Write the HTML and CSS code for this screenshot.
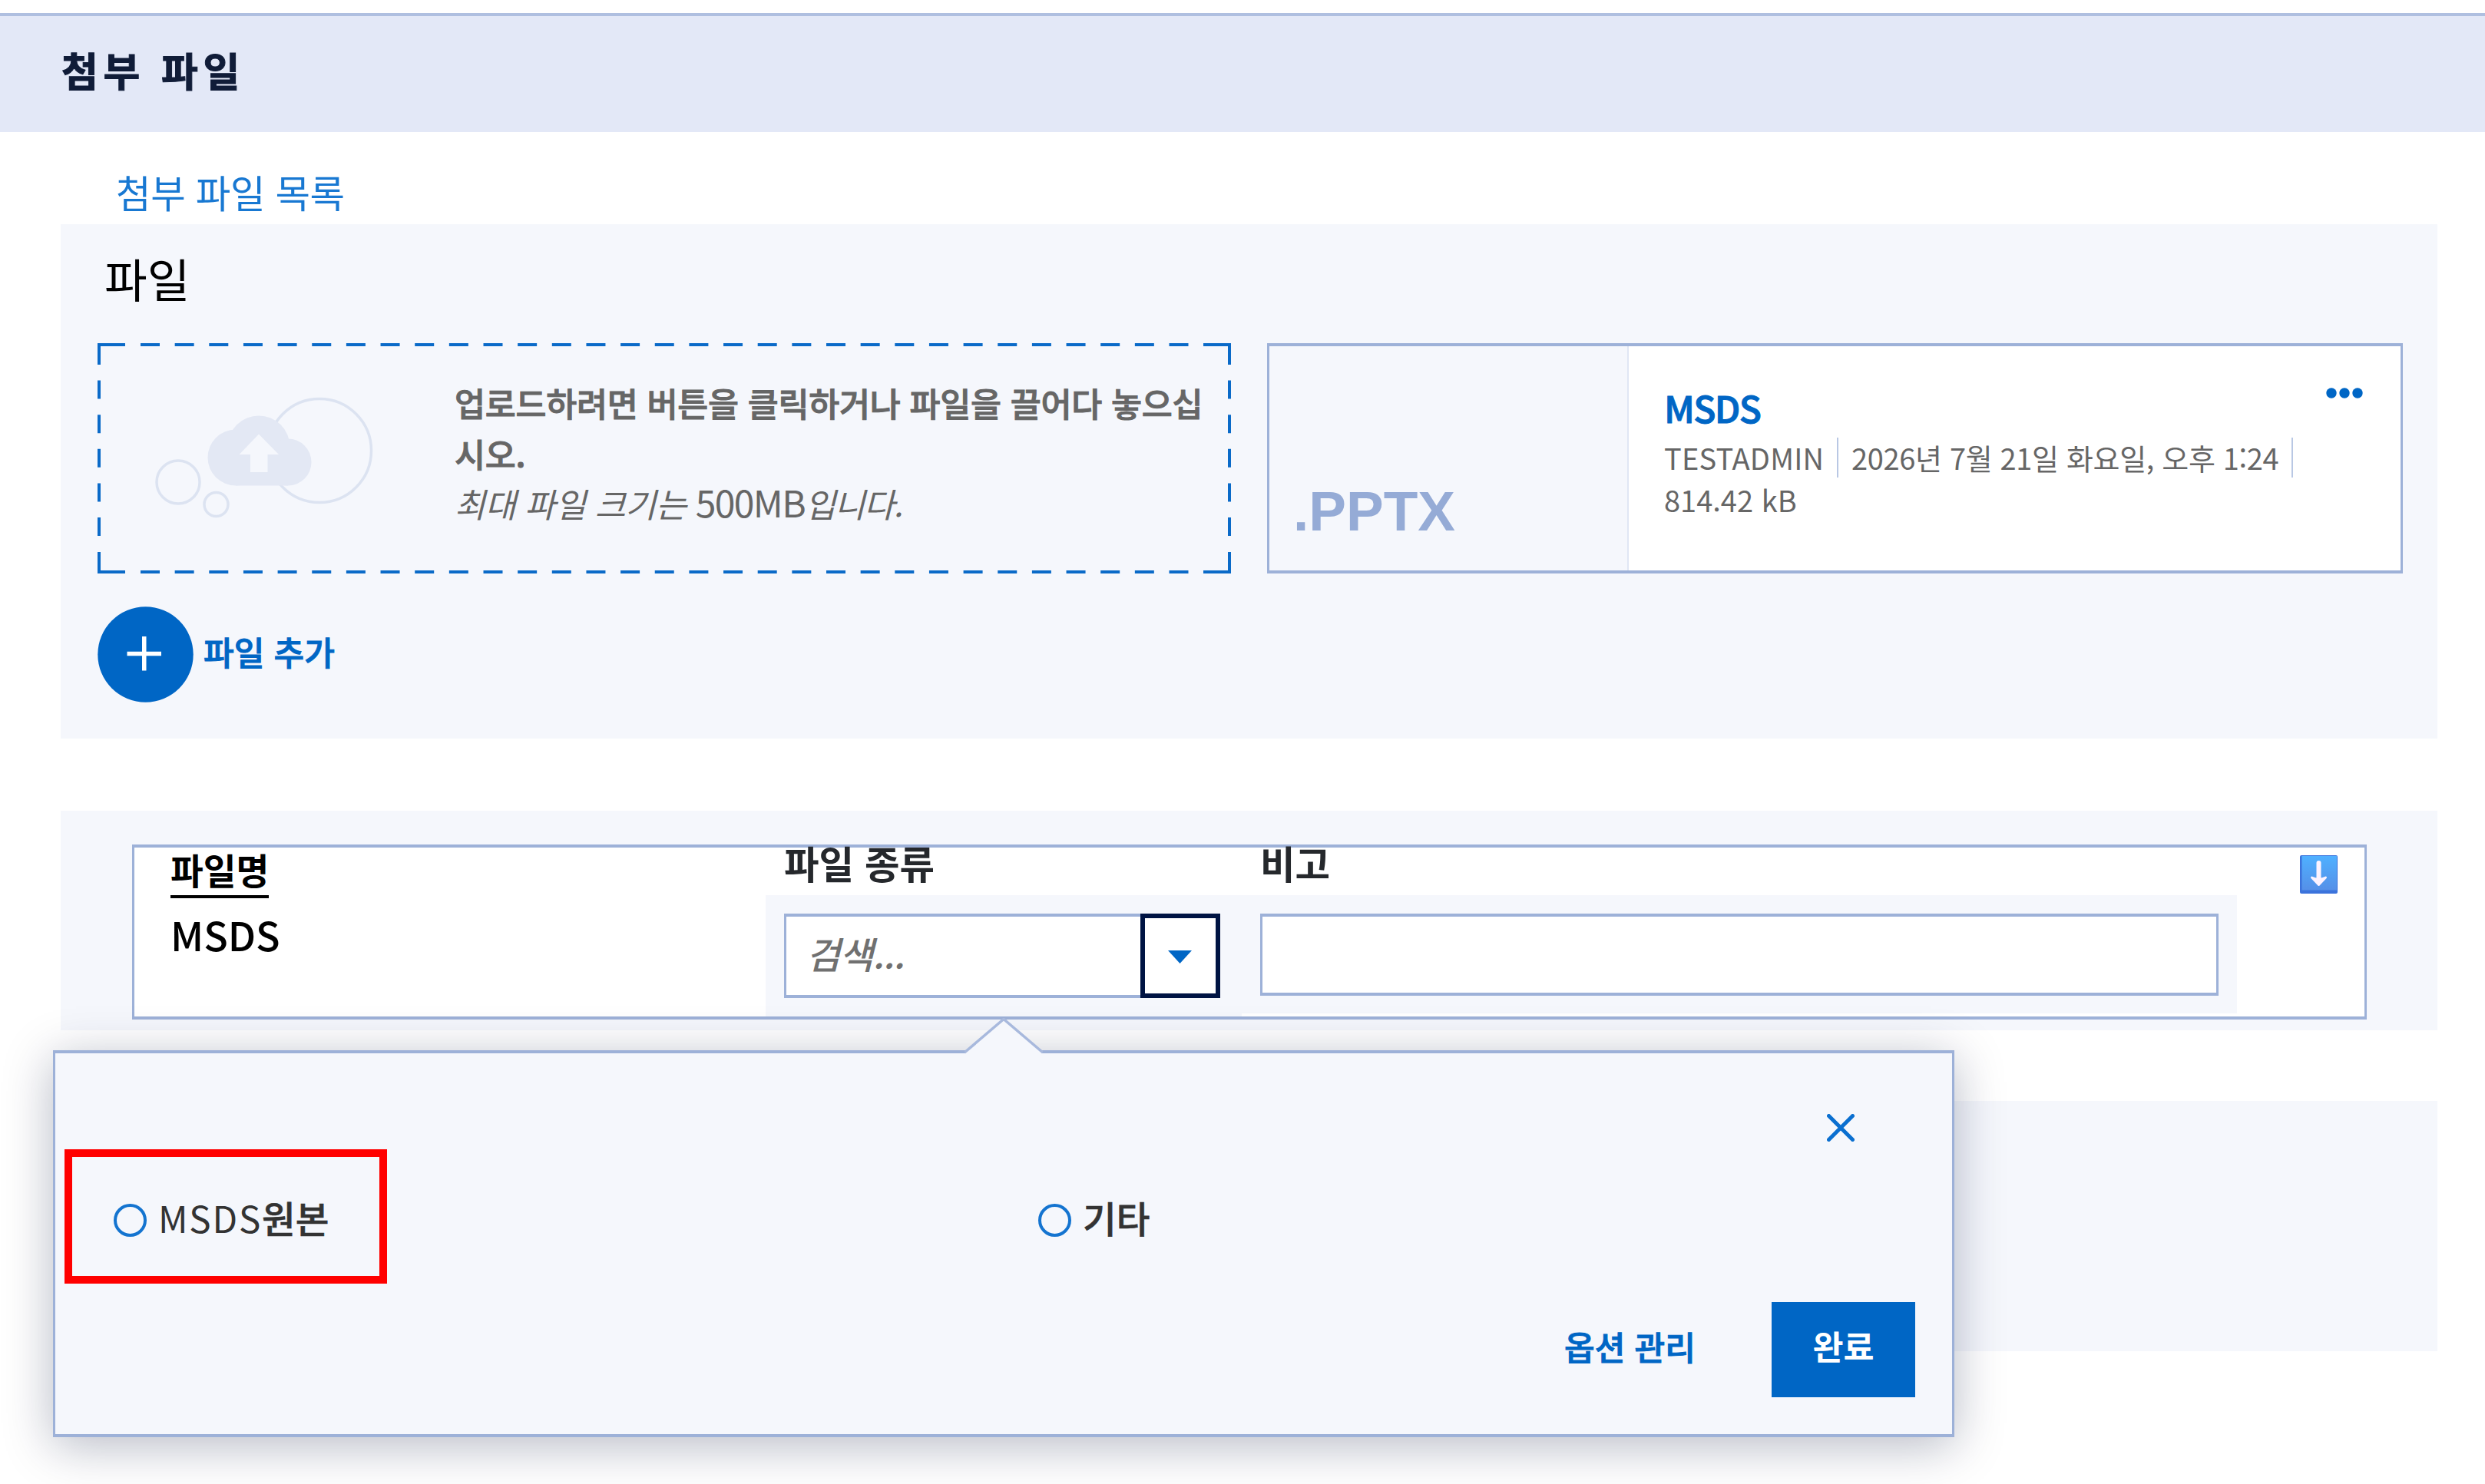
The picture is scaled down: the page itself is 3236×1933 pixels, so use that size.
FILE: index.html
```html
<!DOCTYPE html>
<html lang="ko">
<head>
<meta charset="utf-8">
<title>첨부 파일</title>
<link rel="stylesheet" href="styles.css">
</head>
<body>
<header class="section-header"><h1 class="section-title">첨부 파일</h1></header>
<nav class="tabs"><a class="tab-link">첨부 파일 목록</a></nav>

<main class="content">
  <section class="panel files">
    <h2 class="files-title">파일</h2>
    <div class="file-grid">
      <div class="dropzone">
        <svg class="dash-frame" width="1476" height="300" viewBox="0 0 1476 300" fill="none" stroke="#0a6ac8" stroke-width="4">
          <path d="M56 2H1436M56 298H1436" stroke-dasharray="25 19.65"/>
          <path d="M2 48.5V268M1474 48.5V268" stroke-dasharray="24 20.65"/>
          <path d="M36 2H2V28M1440 2H1474V28M36 298H2V272M1440 298H1474V272"/>
        </svg>
        <svg class="drop-art" width="465" height="300" viewBox="127 447 465 300">
          <g fill="#f5f7fc" stroke="#dce3f1" stroke-width="3.500">
            <circle cx="416" cy="587" r="67.500"/>
            <circle cx="232" cy="628" r="28"/>
            <circle cx="281.500" cy="657" r="15.500"/>
          </g>
          <g fill="#e3e8f4">
            <circle cx="337" cy="582" r="40.500"/>
            <circle cx="307" cy="596" r="36.500"/>
            <circle cx="375" cy="602" r="30.500"/>
            <path d="M307 590H375V632.500H307z"/>
          </g>
          <path fill="#f5f7fc" d="M337 565.500L363 592H348.500V615H326V592H311.500z"/>
        </svg>
        <div class="drop-text">
          <p class="drop-lead">업로드하려면 버튼을 클릭하거나 파일을 끌어다 놓으십<br>시오.</p>
          <p class="drop-hint"><i>최대 파일 크기는</i> <span class="size">500MB</span><i class="tail">입니다.</i></p>
        </div>
      </div>

      <article class="file-card">
        <div class="thumb">.PPTX</div>
        <div class="file-info">
          <div class="file-top">
            <a class="file-name">MSDS</a>
            <svg class="more" width="48" height="16" viewBox="0 0 48 16" fill="#0066c5"><circle cx="7" cy="8" r="6.700"/><circle cx="24" cy="8" r="6.700"/><circle cx="41" cy="8" r="6.700"/></svg>
          </div>
          <div class="meta"><span class="owner">TESTADMIN</span><span class="bar"></span><span class="date">2026년 7월 21일 화요일, 오후 1:24</span><span class="bar"></span></div>
          <div class="meta"><span class="bytes">814.42 kB</span></div>
        </div>
      </article>
    </div>
    <div class="add-row">
      <svg width="125" height="125" viewBox="0 0 125 125"><circle cx="62.500" cy="62.500" r="62.200" fill="#0066c5"/><path d="M38.500 61.500H83M60.750 39V83.500" stroke="#fff" stroke-width="5.500"/></svg>
      <span class="add-label">파일 추가</span>
    </div>
  </section>

  <section class="panel records">
    <div class="record">
      <div class="name-col">
        <span class="name-head">파일명</span>
        <span class="name-value">MSDS</span>
      </div>
      <div class="field type-field">
        <label class="field-label">파일 종류</label>
        <div class="field-body">
          <div class="combo">
            <div class="combo-input">검색...</div>
            <div class="combo-button"><svg width="32" height="18" viewBox="0 0 32 18"><path d="M0 0H31L15.500 17z" fill="#0066c5"/></svg></div>
          </div>
        </div>
      </div>
      <div class="field note-field">
        <label class="field-label">비고</label>
        <div class="field-body"><div class="note-input"></div></div>
      </div>
      <svg class="download" width="49" height="50" viewBox="0 0 49 50">
        <defs><linearGradient id="dl" x1="0" y1="0" x2="0" y2="1"><stop offset="0" stop-color="#4fb0ff"/><stop offset="1" stop-color="#5590e8"/></linearGradient></defs>
        <rect width="49" height="50" rx="2" fill="#3b73dc"/>
        <path d="M2.500 1H48V45.500H2.500z" fill="url(#dl)"/>
        <path d="M24.500 10V32" stroke="#fdf3ff" stroke-width="6" stroke-linecap="round"/>
        <path d="M15.500 29Q24.500 33 33.500 29L24.500 38.500z" fill="#fdf3ff" stroke="#fdf3ff" stroke-width="3" stroke-linejoin="round"/>
      </svg>
    </div>
  </section>

  <section class="panel blank"></section>
</main>

<div class="popup" role="dialog">
  <svg class="popup-tip" width="102" height="48" viewBox="0 0 102 48"><path d="M1 44L51 1L101 44V48H1z" fill="#f5f7fc"/><path d="M0 45L51 1.500L102 45" fill="none" stroke="#a8b9dd" stroke-width="3.500"/></svg>
  <div class="popup-head"><svg width="36" height="36" viewBox="0 0 36 36"><path d="M2.500 2.500L33.500 33.500M33.500 2.500L2.500 33.500" stroke="#0a6fd0" stroke-width="5" stroke-linecap="round"/></svg></div>
  <div class="options">
    <div class="option"><span class="radio"></span><span class="option-label"><span class="latin">MSDS</span>원본</span></div>
    <div class="option"><span class="radio"></span><span class="option-label">기타</span></div>
  </div>
  <div class="popup-foot"><a class="manage">옵션 관리</a><div class="done">완료</div></div>
  <div class="highlight"></div>
</div>
</body>
</html>
```
FILE: styles.css
```css
* { box-sizing: border-box; }
body {
  margin: 0;
  padding-top: 17px;
  width: 3236px;
  height: 1933px;
  position: relative;
  overflow: hidden;
  background: #fff;
  font-family: "Noto Sans CJK KR", sans-serif;
}
h1, h2, p { margin: 0; font-weight: inherit; }
svg { display: block; flex: none; }

.section-header {
  height: 155px;
  border-top: 4px solid #afbfe0;
  background: #e3e8f7;
  padding-left: 80px;
}
.section-title {
  font-size: 52px;
  font-weight: 700;
  letter-spacing: 6.6px;
  line-height: 139px;
  color: #101c38;
  -webkit-text-stroke: 1px #101c38;
}
.tabs { height: 120px; padding-left: 151px; }
.tab-link { font-size: 49.5px; letter-spacing: -.4px; line-height: 156px; color: #1878d2; }

.content { padding: 0 62px 0 79px; }
.panel { background: #f5f7fc; }

.files { height: 670px; padding: 0 45px 0 48px; }
.files-title { font-size: 60.5px; line-height: 140px; margin-bottom: 15px; padding-left: 9px; color: #000; }
.file-grid { display: grid; grid-template-columns: 1476px 1479px; gap: 47px; height: 300px; }

.dropzone { position: relative; display: flex; }
.dash-frame { position: absolute; inset: 0; }
.drop-text { padding-top: 45px; line-height: 65.5px; font-size: 43.5px; color: #666; white-space: nowrap; }
.drop-lead { font-weight: 500; letter-spacing: -.25px; -webkit-text-stroke: 1px #666; }
.drop-hint { letter-spacing: -.3px; }
.size { font-size: 48px; line-height: 1; letter-spacing: -1.6px; }
.tail { letter-spacing: -1.6px; }

.file-card { display: flex; border: 4px solid #9db1d8; border-width: 4px 3px; background: #fff; }
.thumb {
  width: 468px;
  padding: 0 0 41px 31px;
  display: flex;
  align-items: flex-end;
  background: #f5f7fc;
  border-right: 2px solid #e0e6f4;
  font: 700 73px/1 "Liberation Sans", sans-serif;
  color: #95abd6;
}
.file-info { flex: 1; padding: 49px 49px 0 46px; }
.file-top { display: flex; justify-content: space-between; margin-bottom: 8px; }
.file-name { font-size: 48px; line-height: 60px; font-weight: 500; letter-spacing: -1.6px; color: #0066c5; -webkit-text-stroke: 1px #0066c5; }
.more { margin-top: 4px; }
.meta { display: flex; align-items: center; height: 55px; font-size: 38px; line-height: 55px; color: #666; white-space: nowrap; }
.owner { letter-spacing: .15px; }
.date { letter-spacing: -.35px; }
.bar { width: 2px; height: 52px; margin: 0 17px; background: #b9c8e4; }

.add-row { display: flex; align-items: center; gap: 13px; margin-top: 43px; }
.add-label { font-size: 43.2px; font-weight: 500; color: #0066c5; padding-bottom: 10px; -webkit-text-stroke: 1px #0066c5; }

.records { height: 286px; margin-top: 94px; padding: 44px 92px 0 93px; }
.record { display: flex; align-items: flex-start; height: 228px; border: 4px solid #9db1d8; border-width: 4px 3px; background: #fff; }
.name-col { width: 822px; padding-left: 47px; display: flex; flex-direction: column; align-items: flex-start; color: #000; }
.name-head { font-size: 46.5px; font-weight: 700; line-height: 55px; height: 66px; border-bottom: 4px solid #000; }
.name-value { margin-top: 12px; font-size: 52px; font-weight: 500; line-height: 70px; }
.field-label { display: block; height: 62px; line-height: 40px; font-size: 49.5px; font-weight: 700; color: #25282c; }
.type-field { width: 620px; }
.note-field { width: 1296px; }
.type-field .field-label, .note-field .field-label { padding-left: 24px; }
.field-body { padding: 24px 0 0 24px; background: #f5f7fc; }
.type-field .field-body { height: 158px; }
.note-field .field-body { height: 154px; }
.combo { display: flex; width: 568px; height: 110px; }
.combo-input {
  flex: 1;
  display: flex;
  align-items: center;
  padding: 0 0 8px 26px;
  border: 4px solid #9db1d8;
  border-width: 4px 0 4px 3px;
  background: #fff;
  font-size: 48px;
  font-style: italic;
  font-weight: 500;
  letter-spacing: -.9px;
  color: #707070;
}
.combo-button { width: 104px; border: 6px solid #001443; background: #fff; display: flex; align-items: center; justify-content: center; padding-top: 4px; }
.note-input { width: 1248px; height: 107px; border: 4px solid #9db1d8; border-width: 4px 3px; background: #fff; }
.download { margin: 10px 0 0 82px; }

.blank { height: 326px; margin-top: 92px; }

.popup {
  position: absolute;
  left: 69px;
  top: 1368px;
  width: 2476px;
  height: 504px;
  border: 4px solid #9db1d8;
  border-width: 4px 3px;
  background: #f5f7fc;
  box-shadow: 0 11px 60px rgba(8, 18, 56, .29);
}
.popup-tip { position: absolute; left: 1184px; top: -46px; }
.popup-head { display: flex; justify-content: flex-end; padding: 79px 127px 0 0; }
.options { display: flex; margin-top: 62px; padding-left: 76px; }
.option { display: flex; align-items: center; gap: 15px; width: 1204px; flex: none; height: 80px; }
.radio { width: 43px; height: 43px; border: 4px solid #1474d0; border-radius: 50%; }
.option-label { font-size: 47.5px; font-weight: 500; line-height: 80px; padding-bottom: 6px; color: #333; -webkit-text-stroke: .6px #333; }
.latin { font-weight: 400; letter-spacing: 1.8px; -webkit-text-stroke: 0; }
.popup-foot { display: flex; justify-content: flex-end; align-items: center; gap: 99px; margin-top: 67px; padding-right: 48px; }
.manage { font-size: 43.2px; font-weight: 500; color: #0066c5; padding-bottom: 10px; -webkit-text-stroke: 1px #0066c5; }
.done { width: 187px; height: 124px; background: #0066c5; color: #fff; font-size: 43.5px; font-weight: 700; line-height: 113px; text-align: center; }
.highlight { position: absolute; left: 12px; top: 125px; width: 420px; height: 175px; border: 10px solid #f00; }
```
